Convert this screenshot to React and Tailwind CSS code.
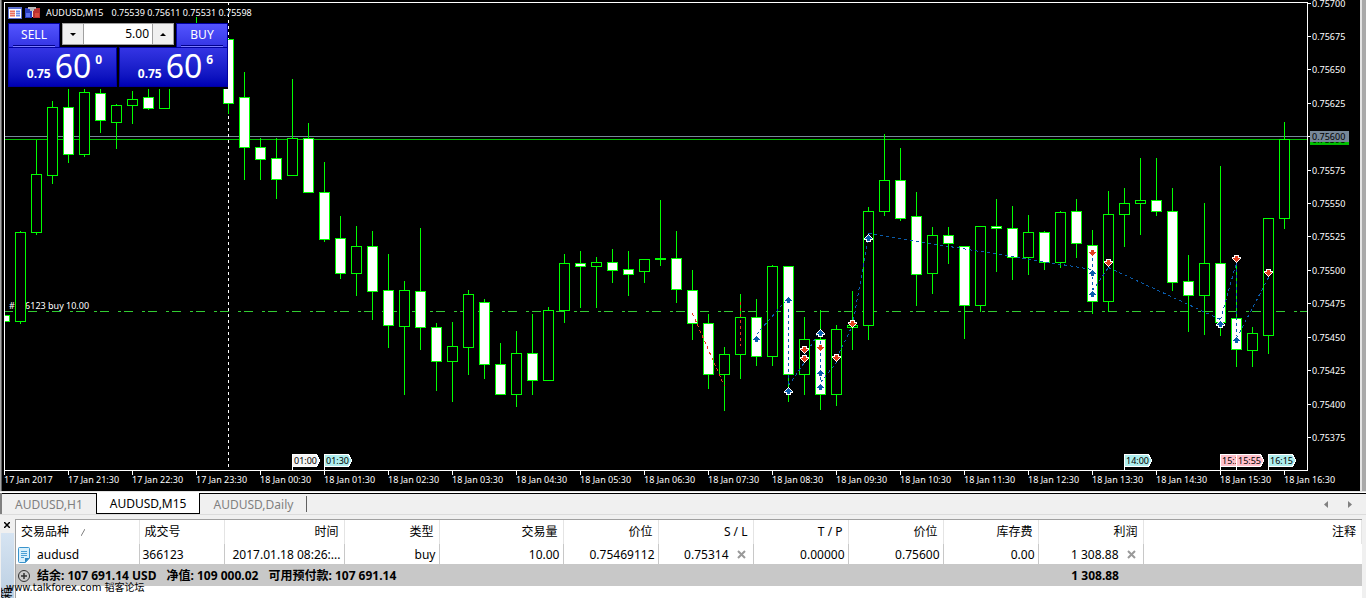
import React, { useState } from 'react';
import clsx from 'clsx';

// [x, filled, high, bodyTop, bodyBottom, low]
const candles = [
  [20, 0, 231, 232, 321, 323], [36, 0, 140, 174, 232, 234], [52, 0, 101, 107, 175, 183],
  [68, 1, 86, 107, 154, 162], [84, 0, 86, 92, 154, 156], [100, 1, 86, 93, 120, 132],
  [116, 0, 104, 105, 122, 148], [132, 0, 91, 99, 105, 123], [148, 1, 86, 97, 108, 109],
  [164, 0, 80, 82, 108, 108], [196, 0, 17, 30, 60, 70], [228, 1, 39, 39, 103, 113],
  [244, 1, 72, 97, 147, 179], [260, 1, 138, 147, 159, 179], [276, 1, 138, 158, 179, 198],
  [292, 0, 79, 138, 175, 175], [308, 1, 123, 138, 192, 192], [324, 1, 162, 192, 239, 241],
  [340, 1, 216, 238, 273, 278], [356, 0, 226, 246, 273, 295], [372, 1, 231, 246, 291, 319],
  [388, 1, 254, 290, 325, 347], [404, 0, 281, 290, 326, 394], [420, 1, 228, 291, 327, 349],
  [436, 1, 323, 327, 361, 390], [452, 0, 322, 346, 361, 401], [468, 0, 290, 294, 347, 374],
  [484, 1, 299, 302, 364, 378], [500, 1, 343, 364, 394, 394], [516, 0, 331, 353, 394, 406],
  [532, 1, 314, 353, 380, 394], [548, 0, 307, 310, 380, 380], [564, 0, 254, 263, 310, 322],
  [580, 1, 251, 263, 266, 307], [596, 0, 257, 262, 266, 307], [612, 1, 249, 262, 270, 282],
  [628, 1, 251, 269, 274, 295], [644, 0, 259, 259, 271, 282], [660, 0, 200, 258, 259, 265],
  [676, 1, 231, 258, 289, 302], [692, 1, 270, 290, 323, 339], [708, 1, 314, 323, 374, 388],
  [724, 0, 347, 354, 374, 410], [740, 0, 294, 317, 354, 378], [756, 1, 299, 317, 356, 365],
  [772, 0, 265, 266, 356, 365], [788, 1, 266, 266, 374, 401], [804, 0, 317, 339, 374, 394],
  [820, 1, 310, 339, 394, 409], [836, 0, 325, 329, 394, 405], [852, 0, 291, 325, 327, 349],
  [868, 0, 207, 211, 325, 339], [884, 0, 134, 180, 211, 215], [900, 1, 148, 180, 218, 220],
  [916, 1, 192, 216, 274, 305], [932, 0, 227, 235, 273, 293], [948, 1, 227, 235, 243, 263],
  [964, 1, 246, 246, 305, 338], [980, 0, 226, 226, 305, 311], [996, 1, 199, 226, 228, 271],
  [1012, 1, 206, 228, 257, 279], [1028, 0, 215, 232, 257, 274], [1044, 1, 231, 232, 262, 269],
  [1060, 0, 211, 212, 262, 267], [1076, 1, 199, 211, 243, 257], [1092, 1, 230, 245, 301, 313],
  [1108, 0, 191, 214, 301, 311], [1124, 0, 188, 203, 214, 246], [1140, 0, 158, 200, 203, 234],
  [1156, 1, 158, 200, 211, 215], [1172, 1, 188, 211, 282, 290], [1188, 1, 255, 281, 295, 331],
  [1204, 0, 203, 263, 295, 334], [1220, 1, 166, 263, 322, 335], [1236, 1, 261, 318, 349, 366],
  [1252, 0, 327, 333, 350, 366], [1268, 0, 218, 218, 335, 353], [1284, 0, 122, 139, 218, 228]
];

const prices = [
  ['0.75700', 3], ['0.75675', 36], ['0.75650', 69], ['0.75625', 103], ['0.75575', 170],
  ['0.75550', 203], ['0.75525', 236], ['0.75500', 270], ['0.75475', 303], ['0.75450', 337],
  ['0.75425', 370], ['0.75400', 404], ['0.75375', 437]
];

const times = [
  '17 Jan 2017', '17 Jan 21:30', '17 Jan 22:30', '17 Jan 23:30', '18 Jan 00:30', '18 Jan 01:30',
  '18 Jan 02:30', '18 Jan 03:30', '18 Jan 04:30', '18 Jan 05:30', '18 Jan 06:30', '18 Jan 07:30',
  '18 Jan 08:30', '18 Jan 09:30', '18 Jan 10:30', '18 Jan 11:30', '18 Jan 12:30', '18 Jan 13:30',
  '18 Jan 14:30', '18 Jan 15:30', '18 Jan 16:30'
];

const events = [
  { x: 292, time: '01:00', color: '#f5f5f5' },
  { x: 324, time: '01:30', color: '#afeeee' },
  { x: 1124, time: '14:00', color: '#afeeee' },
  { x: 1220, time: '15:30', color: '#ffc0cb' },
  { x: 1236, time: '15:55', color: '#ffc0cb' },
  { x: 1268, time: '16:15', color: '#afeeee' }
];

const BLUE = '#0a5cab';
const RED = '#e2401f';

const deals = [
  [692, 313, 724, 386, RED], [740, 301, 740, 345, RED],
  [756, 334, 788, 297, BLUE], [788, 308, 788, 386, BLUE], [788, 385, 804, 362, BLUE],
  [804, 356, 820, 329, BLUE], [820, 340, 820, 385, BLUE], [820, 382, 836, 362, BLUE],
  [836, 358, 852, 325, BLUE], [852, 325, 868, 236, BLUE], [868, 233, 1092, 269, BLUE],
  [1092, 257, 1092, 292, BLUE], [1092, 290, 1108, 267, BLUE], [1108, 267, 1220, 319, BLUE],
  [1220, 319, 1236, 262, BLUE], [1236, 262, 1236, 340, BLUE], [1236, 338, 1268, 277, BLUE]
];

const buys = [
  [756, 339], [788, 300], [788, 391], [820, 333], [820, 373], [820, 387], [868, 238],
  [1092, 273], [1092, 294], [1220, 324], [1236, 340]
];
const sells = [
  [804, 349], [804, 358], [820, 347], [836, 357], [852, 323], [1092, 252], [1108, 262],
  [1236, 258], [1268, 272]
];

function Candle({ x, filled, high, top, bottom, low }) {
  return (
    <g>
      <rect x={x} y={high} width="1" height={low - high + 1} fill="#00ff00" />
      <rect x={x - 5} y={top} width="11" height={bottom - top + 1} fill="#00ff00" />
      {bottom - top > 1 && (
        <rect x={x - 4} y={top + 1} width="9" height={bottom - top - 1} fill={filled ? '#fff' : '#000'} />
      )}
    </g>
  );
}

function DealArrow({ x, y, down }) {
  return (
    <g transform={`translate(${x} ${y})${down ? ' scale(1 -1) translate(0 -1)' : ''}`}>
      <path d="M0-4h1v1h1v1h1v1h1v1h1v2h-2v2h-5v-2h-2v-2h1v-1h1v-1h1v-1h1z" fill="#fff" />
      <path d="M0-3h1v1h1v1h1v1h1v1h-2v2h-3v-2h-2v-1h1v-1h1v-1h1z" fill={down ? RED : BLUE} />
    </g>
  );
}

function Chart() {
  return (
    <svg
      viewBox="2 0 1358 491"
      className="block w-full font-['Noto_Sans',sans-serif] text-[9px]"
      shapeRendering="crispEdges"
      role="img"
      aria-label="AUDUSD,M15"
    >
      {/* price lines */}
      <rect x="5" y="136" width="1302" height="1" fill="#778899" />
      <rect x="5" y="139" width="1302" height="1" fill="#00c000" />
      <path d="M4 311.5H1307" stroke="#32cd32" strokeDasharray="9 9 3 3" />
      <path d="M228.5 2V468" stroke="#fff" strokeDasharray="3 3" />
      <text x="9" y="309" fill="#fff">#366123 buy 10.00</text>

      <rect x="5" y="315" width="5" height="7" fill="#00ff00" />
      <rect x="5" y="316" width="4" height="5" fill="#fff" />
      {candles.map(([x, filled, high, top, bottom, low]) => (
        <Candle key={x} x={x} filled={filled} high={high} top={top} bottom={bottom} low={low} />
      ))}

      {deals.map(([x1, y1, x2, y2, color], i) => (
        <line
          key={i}
          x1={x1 + 0.5}
          y1={y1 + 0.5}
          x2={x2 + 0.5}
          y2={y2 + 0.5}
          stroke={color}
          strokeDasharray="3 3"
        />
      ))}
      {buys.map(([x, y]) => <DealArrow key={`${x}-${y}`} x={x} y={y} />)}
      {sells.map(([x, y]) => <DealArrow key={`${x}-${y}`} x={x} y={y} down />)}

      {/* frame and price scale */}
      <path d="M4.500 471V2.500H1307.500V470.500H4.500" stroke="#fff" fill="none" />
      {prices.map(([label, y]) => (
        <g key={label} fill="#fff">
          <rect x="1307" y={y} width="4" height="1" />
          <text x="1312" y={y + 4}>{label}</text>
        </g>
      ))}
      <rect x="1307" y="136" width="4" height="1" fill="#fff" />
      <rect x="1310" y="134" width="39" height="11" fill="#00c000" />
      <text x="1312" y="143" fill="#000">0.75598</text>
      <rect x="1310" y="131" width="39" height="11" fill="#778899" />
      <text x="1312" y="140" fill="#000">0.75600</text>

      {/* time scale */}
      {times.map((label, i) => (
        <g key={label} fill="#fff">
          <rect x={4 + i * 64} y="470" width="1" height="5" />
          <text x={4 + i * 64} y="483">{label}</text>
        </g>
      ))}
      {events.map((e) => (
        <g key={e.x}>
          <rect x={e.x} y="454" width="1" height="17" fill="#fff" />
          <path d={`M${e.x} 454h25l3 6v1l-3 6h-25z`} fill="#fff" />
          <path d={`M${e.x + 1} 455h23l3 5v1l-3 5h-23z`} fill={e.color} />
          <text x={e.x + 2} y="464" fill="#000">{e.time}</text>
        </g>
      ))}
    </svg>
  );
}

function QuoteButton({ side, pips, point }) {
  return (
    <button
      aria-label={`${side} 0.75${pips}${point}`}
      className="flex h-10 flex-1 items-end justify-center gap-1 border border-[#0000a0] bg-linear-to-b from-[#3434e4] to-[#0000b4] pb-1 pl-1 font-bold text-white"
    >
      <span>0.75</span>
      <span className="text-[32px] leading-8 font-normal">{pips}</span>
      <span className="self-start pt-1">{point}</span>
    </button>
  );
}

function SideButton({ label }) {
  return (
    <button className="flex h-6 w-13 flex-col border border-b-0 border-[#0000a0] bg-linear-to-b from-[#5454ff] to-[#3434e4] px-1 text-white">
      <span className="flex w-full flex-1 items-center justify-center border-b border-[#00008b]">{label}</span>
      <span className="h-px w-full bg-[#7c7cff]" />
    </button>
  );
}

function OneClickPanel() {
  const [lots, setLots] = useState('5.00');
  const step = (by) => setLots((Number(lots) + by).toFixed(2));

  return (
    <div className="absolute top-0 left-0.5 pt-[7px] pl-1 font-['Noto_Sans',sans-serif] text-xs leading-4">
      <div className="flex h-3 items-center gap-[3px] pr-1 text-[9px] leading-3 text-white">
        <svg width="14" height="12" viewBox="0 0 14 12" shapeRendering="crispEdges">
          <path d="M0 0h14v12H0z" fill="#5a6fd0" />
          <path d="M1 2h12v9H1z" fill="#fff" />
          <path d="M2 3h5v7H2z" fill="#f6b4aa" />
          <path d="M2 4h5v1H2zM2 6h5v1H2zM2 8h5v1H2z" fill="#e8705e" />
          <path d="M8 3h4v7H8z" fill="#b8c8f6" />
          <path d="M8 4h4v1H8zM8 6h4v1H8zM8 8h4v1H8z" fill="#6a8ae8" />
        </svg>
        <svg width="15" height="12" viewBox="0 0 15 12" shapeRendering="crispEdges">
          <path d="M0 1h7v10H0z" fill="#2a3fc0" />
          <path d="M8 1h7v10H8z" fill="#b83030" />
          <path d="M1 6h4v4H1z" fill="#5a70f0" />
          <path d="M10 6h4v4h-4z" fill="#d84a3c" />
          <path d="M3 0h8v2h-2v2H5V2H3z" fill="#b8b8b8" />
          <path d="M7 4h1v6H7z" fill="#e8e8e8" />
        </svg>
        <h1 className="flex gap-2 pl-[3px] whitespace-pre">
          <span>AUDUSD,M15</span>
          <span>0.75539 0.75611 0.75531 0.75598</span>
        </h1>
      </div>
      <div className="mt-1 w-[220px] bg-black pb-0.5">
        <div className="flex justify-between">
          <SideButton label="SELL" />
          <div className="flex h-[22px] border border-[#a0a0a0] bg-white">
            <button
              aria-label="Decrease"
              onClick={() => step(-1)}
              className="flex w-[21px] items-center justify-center border-r border-[#a0a0a0] bg-[#f0f0f0]"
            >
              <svg width="6" height="3" viewBox="0 0 6 3"><path d="M0 0h6L3 3z" /></svg>
            </button>
            <input
              aria-label="Lots"
              value={lots}
              onChange={(e) => setLots(e.target.value)}
              className="w-[68px] px-[3px] text-right outline-none"
            />
            <button
              aria-label="Increase"
              onClick={() => step(1)}
              className="flex w-[21px] items-center justify-center border-l border-[#a0a0a0] bg-[#f0f0f0]"
            >
              <svg width="6" height="3" viewBox="0 0 6 3"><path d="M0 3h6L3 0z" /></svg>
            </button>
          </div>
          <SideButton label="BUY" />
        </div>
        <div className="flex gap-0.5">
          <QuoteButton side="SELL" pips="60" point="0" />
          <QuoteButton side="BUY" pips="60" point="6" />
        </div>
      </div>
    </div>
  );
}

function ChartTabs() {
  const [active, setActive] = useState('AUDUSD,M15');
  const tabs = ['AUDUSD,H1', 'AUDUSD,M15', 'AUDUSD,Daily'];

  return (
    <nav className="flex h-[21px] items-stretch border-l-2 border-[#808080] bg-[#f0f0f0] text-[#808080]">
      {tabs.map((tab) => (
        <button
          key={tab}
          onClick={() => setActive(tab)}
          className={clsx(
            'border-black px-[13px] pt-px whitespace-nowrap',
            tab === active ? 'border-x border-b bg-white text-black' : 'border-t'
          )}
        >
          {tab}
        </button>
      ))}
      <div className="flex flex-1 items-center justify-end gap-5 border-t border-black pr-3.5">
        <span className="mr-auto h-4 w-px bg-[#606060]" />
        <button aria-label="Scroll left">
          <svg width="4" height="7" viewBox="0 0 4 7"><path d="M4 0v7L0 3.500z" fill="#808080" /></svg>
        </button>
        <button aria-label="Scroll right">
          <svg width="4" height="7" viewBox="0 0 4 7"><path d="M0 0v7l4-3.500z" fill="#808080" /></svg>
        </button>
      </div>
    </nav>
  );
}

function CloseButton({ label }) {
  return (
    <button aria-label={label} className="ml-1 inline-flex w-[17px] justify-center">
      <svg width="9" height="9" viewBox="0 0 9 9"><path d="M1 1l7 7M8 1L1 8" stroke="#999" strokeWidth="2" /></svg>
    </button>
  );
}

const columns = [
  { label: '交易品种', width: 'w-[123px]' },
  { label: '成交号', width: 'w-[85px]' },
  { label: '时间', width: 'w-[120px]' },
  { label: '类型', width: 'w-[95px]' },
  { label: '交易量', width: 'w-[124px]' },
  { label: '价位', width: 'w-[95px]' },
  { label: 'S / L', width: 'w-[95px]' },
  { label: 'T / P', width: 'w-[95px]' },
  { label: '价位', width: 'w-[95px]' },
  { label: '库存费', width: 'w-[95px]' },
  { label: '利润', width: 'w-[105px]' },
  { label: '注释', width: 'w-auto' }
];

function TradeTable() {
  const cell = 'border-r border-[#c8c8c8] px-[3px] pt-0.5 text-right whitespace-nowrap';
  return (
    <table className="w-full table-fixed border-collapse">
      <colgroup>
        {columns.map((c, i) => <col key={i} className={c.width} />)}
      </colgroup>
      <thead>
        <tr className="h-6">
          {columns.map((c, i) => (
            <th
              key={i}
              className={clsx(
                'border-r border-[#e4e4e4] px-[5px] font-normal whitespace-nowrap',
                i < 2 ? 'text-left' : 'text-right'
              )}
            >
              {c.label}
              {i === 0 && (
                <svg className="ml-3 inline" width="4" height="7" viewBox="0 0 4 7">
                  <path d="M0 7L4 0" stroke="#808080" />
                </svg>
              )}
            </th>
          ))}
        </tr>
      </thead>
      <tbody>
        <tr className="h-5">
          <td className="border-r border-[#c8c8c8] px-0.5 pt-0.5">
            <div className="flex h-4 items-center gap-[7px]">
              <svg width="12" height="16" viewBox="0 0 12 16">
                <path d="M1.500.5h9a1 1 0 011 1v9.500l-4 4.500h-6a1 1 0 01-1-1v-13a1 1 0 011-1z" fill="#d8f0fc" stroke="#3a94cc" />
                <path d="M7 15.500V11h4.500z" fill="#2a86c0" />
                <path d="M3 4.500h6M3 6.500h6M3 8.500h6M3 10.500h3" stroke="#4aa0d4" />
              </svg>
              audusd
            </div>
          </td>
          <td className="border-r border-[#c8c8c8] px-[3px] pt-0.5">366123</td>
          <td className={cell}>2017.01.18 08:26:...</td>
          <td className={cell}>buy</td>
          <td className={cell}>10.00</td>
          <td className={cell}>0.75469112</td>
          <td className={cell}>0.75314<CloseButton label="Remove stop loss" /></td>
          <td className={cell}>0.00000</td>
          <td className={cell}>0.75600</td>
          <td className={cell}>0.00</td>
          <td className={cell}>1 308.88<CloseButton label="Close position" /></td>
          <td />
        </tr>
        <tr className="h-[22px] bg-[#c8c8c8] font-bold">
          <td colSpan={10} className="px-0.5 pt-0.5">
            <div className="flex items-center gap-[7px]">
              <svg width="12" height="12" viewBox="0 0 12 12" fill="none" stroke="#303030">
                <circle cx="6" cy="6" r="5.500" />
                <path d="M3 6h6M6 3v6" strokeWidth="1.500" />
              </svg>
              <span className="flex gap-2.5">
                <span>结余: 107 691.14 USD</span>
                <span>净值: 109 000.02</span>
                <span>可用预付款: 107 691.14</span>
              </span>
            </div>
          </td>
          <td className="pt-0.5 pr-6 text-right">1 308.88</td>
          <td />
        </tr>
      </tbody>
    </table>
  );
}

export default function App() {
  return (
    <div className="relative flex min-h-screen flex-col overflow-hidden bg-[#f0f0f0] font-['Noto_Sans','Noto_Sans_CJK_SC',sans-serif] text-xs leading-4 text-black">
      <main className="flex bg-black">
        <div className="w-px bg-[#a8a8a8]" />
        <div className="w-px bg-[#606060]" />
        <div className="relative flex-1">
          <Chart />
          <OneClickPanel />
        </div>
        <div className="w-0.5 bg-[#e3e3e3]" />
        <div className="w-1 bg-[#a9a9a9]" />
      </main>
      <div className="h-0.5 border-t border-[#e3e3e3] bg-white" />
      <ChartTabs />
      <div className="h-[5px] border-t border-[#dcdcdc]" />

      <section className="flex flex-1">
        <aside className="flex w-[15px] flex-col">
          <button aria-label="Close" className="flex h-3 items-center justify-center pr-px">
            <svg width="6" height="6" viewBox="0 0 6 6"><path d="M0 0l6 6M6 0L0 6" stroke="#000" strokeWidth="1.500" /></svg>
          </button>
          <div className="relative mt-0.5 mr-px ml-px flex-1 overflow-hidden bg-linear-to-b from-[#d6e4f2] to-[#bccfe2]">
            <span className="absolute top-[54px] left-0 -rotate-90 leading-3">箱</span>
          </div>
        </aside>
        <div className="mr-1 flex-1 border-t border-l border-[#a0a0a0] bg-white">
          <TradeTable />
        </div>
      </section>

      <p className="absolute bottom-1 left-1.5 font-['DejaVu_Sans','Noto_Sans_CJK_SC',sans-serif] text-[10px] leading-3">
        www.talkforex.com 韬客论坛
      </p>
    </div>
  );
}
